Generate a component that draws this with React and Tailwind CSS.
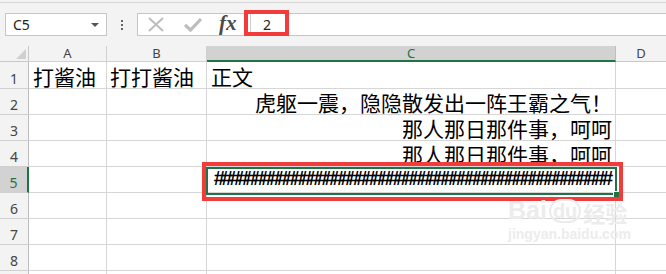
import React from 'react'

const cjk = "font-['Noto_Sans_CJK_SC',sans-serif]"
const ui = "font-['Noto_Sans','Liberation_Sans',sans-serif]"

const rows = [
  {n:1, a:'打酱油', b:'打打酱油', c:'正文', h:'h-[27px]'},
  {n:2, c:'虎躯一震，隐隐散发出一阵王霸之气！', right:true},
  {n:3, c:'那人那日那件事，呵呵', right:true},
  {n:4, c:'那人那日那件事，呵呵', right:true},
  {n:5, hash:true, sel:true},
  {n:6}, {n:7}, {n:8}, {n:9, hidden:true},
]

function Corner(){
  return (
    <svg width="29" height="16" viewBox="0 0 29 16">
      <polygon points="26,3 26,13 16,13" fill="#d0d0d0" />
    </svg>
  )
}

function Cell({w, children, className=''}){
  return (
    <div className={`${w} shrink-0 border-r border-b border-[#d6d6d6] flex items-end overflow-visible whitespace-nowrap ${className}`}>
      {children}
    </div>
  )
}

export default function App(){
  return (
    <div className="w-[666px] h-[274px] overflow-hidden relative bg-white">
      <div className="h-[3px] bg-[#f3f3f3] border-b border-[#d5d5d5]" />
      {/* name box + formula bar */}
      <div className="h-[43px] bg-[#f3f3f3] pt-[10px] flex items-start">
        <div className={`ml-[5px] w-[102px] h-[23px] border border-[#c6c6c6] bg-white flex items-center justify-between pl-[7px] pr-[7px] text-[14px] text-[#222] ${ui}`}>
          <span>C5</span>
          <svg width="8" height="4" viewBox="0 0 8 4"><polygon points="0,0 8,0 4,4" fill="#555" /></svg>
        </div>
        <div className="w-[30px] h-[23px] flex flex-col items-center justify-center gap-[2px]">
          <span className="w-[2px] h-[2px] bg-[#666]" />
          <span className="w-[2px] h-[2px] bg-[#666]" />
          <span className="w-[2px] h-[2px] bg-[#666]" />
        </div>
        <div className="flex-1 h-[23px] border-y border-l border-[#c6c6c6] bg-white flex">
          <div className="w-[112px] flex items-center">
            <svg className="ml-[10px]" width="16" height="15" viewBox="0 0 16 15">
              <path d="M1 1 L15 14 M15 1 L1 14" stroke="#bdbdbd" strokeWidth="2" />
            </svg>
            <svg className="ml-[20px]" width="18" height="14" viewBox="0 0 18 14">
              <path d="M1 7 L6.5 12 L17 1" stroke="#bdbdbd" strokeWidth="3.2" fill="none" />
            </svg>
            <span className="ml-[17px] text-[21px] leading-none italic font-bold text-[#4a4a4a] font-['Liberation_Serif',serif] -mt-[2px]">fx</span>
          </div>
          <div className={`border-l border-[#d0d0d0] flex-1 flex items-center pl-[12px] text-[14px] text-[#222] ${ui}`}>2</div>
        </div>
      </div>

      {/* column headers */}
      <div className={`h-[16px] flex bg-[#f3f3f3] text-[13px] leading-none text-[#444] ${ui}`}>
        <div className="w-[29px] shrink-0 border-r border-b border-[#c8c8c8]"><Corner /></div>
        <div className="w-[78px] shrink-0 border-r border-b border-[#d0d0d0] flex items-center justify-center">A</div>
        <div className="w-[100px] shrink-0 border-r border-b border-[#d0d0d0] flex items-center justify-center">B</div>
        <div className="w-[409px] shrink-0 border-r border-b-2 border-r-[#bdbdbd] border-b-[#217346] bg-[#d2d2d2] text-[#217346] flex items-center justify-center">C</div>
        <div className="flex-1 border-b border-[#c8c8c8] flex items-center justify-center">D</div>
      </div>

      {/* rows */}
      {rows.map(r => (
        <div key={r.n} className={`${r.h || 'h-[26px]'} flex`}>
          <div className={`w-[29px] shrink-0 border-b border-[#d0d0d0] flex items-end justify-center pb-[2px] text-[14px] leading-none ${ui} ${r.sel ? 'bg-[#d2d2d2] text-[#217346] border-r-2 border-r-[#217346]' : 'bg-[#f3f3f3] text-[#444] border-r border-r-[#bdbdbd]'}`}>
            {r.hidden ? null : r.n}
          </div>
          <Cell w="w-[78px]" className={`${cjk} text-[21px] leading-none pl-[4px] pb-[1px]`}>{r.a}</Cell>
          <Cell w="w-[100px]" className={`${cjk} text-[21px] leading-none pl-[3px] pb-[1px]`}>{r.b}</Cell>
          <Cell w="w-[409px]" className={`${cjk} text-[21px] leading-none pb-[1px] pl-[4px] pr-[3px] ${r.right ? 'justify-end' : ''}`}>
            {r.hash ? (
              <span className="w-full text-center font-['Liberation_Sans',sans-serif] italic font-bold text-[20px] tracking-[-3.2px] pb-[3px]">{'#'.repeat(50)}</span>
            ) : r.c}
          </Cell>
          <div className="flex-1 border-b border-[#d6d6d6]" />
        </div>
      ))}

      {/* selection of C5 */}
      <div className="absolute left-[206px] top-[167px] w-[411px] h-[28px] border-2 border-[#217346]" />
      <div className="absolute left-[613px] top-[191px] w-[7px] h-[7px] bg-[#217346] border border-white" />

      {/* red annotation boxes */}
      <div className="absolute left-[202px] top-[162px] w-[421px] h-[39px] border-4 border-[#f23b3b]" />
      <div className="absolute left-[244px] top-[10px] w-[45px] h-[26px] border-4 border-[#f23b3b]" />

      {/* watermark */}
      <div className="absolute left-[508px] top-[198px] flex flex-col items-start text-[#ececec] pointer-events-none">
        <div className="flex items-end gap-[2px] leading-none">
          <span className="font-['Liberation_Sans',sans-serif] font-bold text-[25px]">Bai</span>
          <span className="font-['Liberation_Sans',sans-serif] font-bold text-[20px] rounded-full border-2 border-[#ececec] px-[2px]">du</span>
          <span className={`${cjk} font-bold text-[22px]`}>经验</span>
        </div>
        <span className="font-['Liberation_Sans',sans-serif] text-[14px] font-bold leading-none mt-[4px]">jingyan.baidu.com</span>
      </div>
    </div>
  )
}
